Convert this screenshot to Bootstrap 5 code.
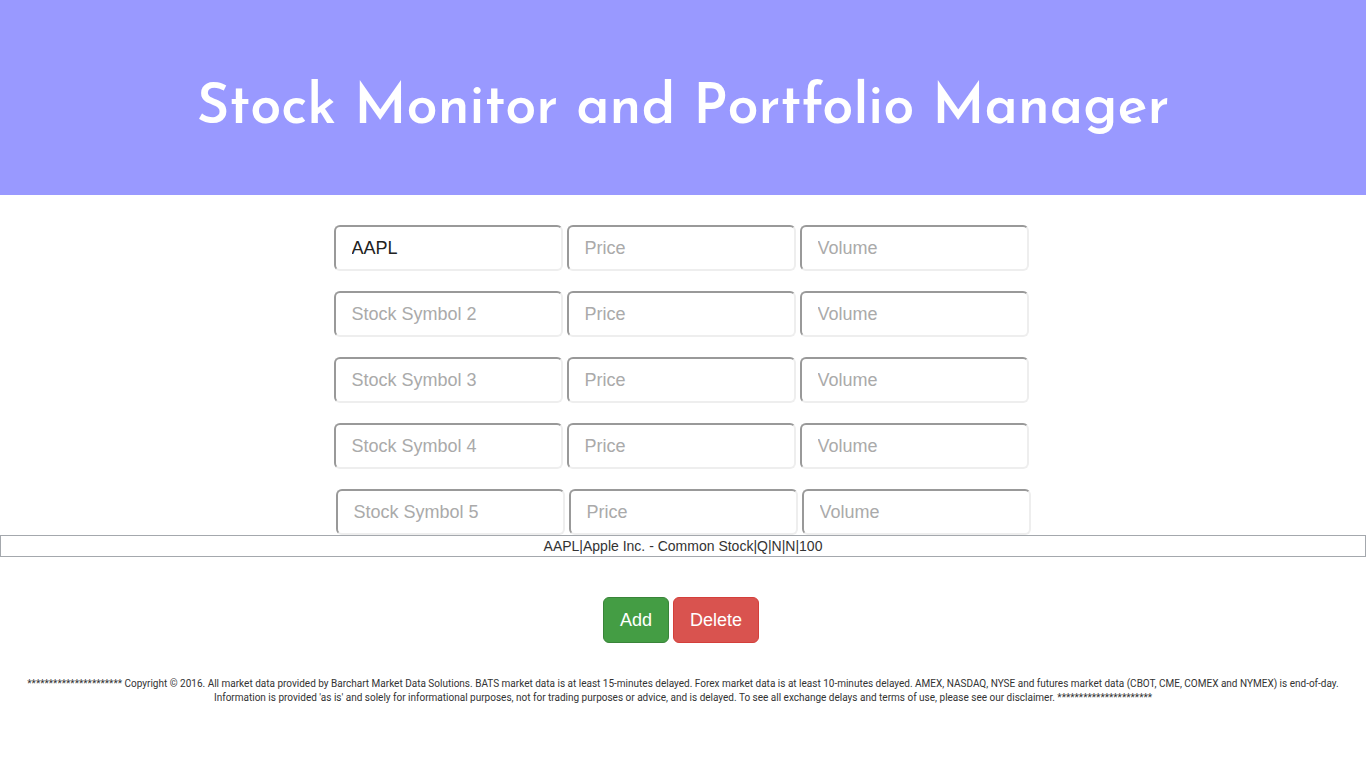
<!DOCTYPE html>
<html lang="en">
<head>
<meta charset="utf-8">
<meta name="viewport" content="width=device-width, initial-scale=1">
<title>Stock Monitor and Portfolio Manager</title>
<link href="https://cdn.jsdelivr.net/npm/bootstrap@5.3.0/dist/css/bootstrap.min.css" rel="stylesheet">
<style>
body { font-family: "Liberation Sans", Arial, sans-serif; font-size: 14px; line-height: 20px; color: #333; background: #fff; }
.banner { background: #99f; padding: 69px 16px 46px; margin-bottom: 30px; }
.banner h1 { font-family: "Josefin Sans", Lato, sans-serif; font-size: 56px; line-height: 80px; font-weight: 600; color: #fff; }
.stock-row + .stock-row { margin-top: 20px; }
.stock-row .form-control { width: 229px; height: 46px; padding: 8px 16px; font-size: 18px; line-height: 24px; color: #222; border: 2px solid #eee; border-top-color: #999; border-left-color: #999; border-radius: 6px; }
.stock-row .form-control::placeholder { color: #aaa; opacity: 1; }
.match-list { border: 1px solid #a4a8ad; margin-bottom: 40px; }
.btn-lg { --bs-btn-padding-x: 16px; --bs-btn-padding-y: 10px; --bs-btn-font-size: 18px; --bs-btn-border-radius: 6px; line-height: 24px; }
.btn-success { --bs-btn-bg: #449d44; --bs-btn-border-color: #398439; }
.btn-danger { --bs-btn-bg: #d9534f; --bs-btn-border-color: #d43f3a; }
footer { font-family: Roboto, sans-serif; font-size: 10px; line-height: 14px; padding: 34px 20px 0; }
</style>
</head>
<body>
<header class="banner text-center">
  <h1 class="m-0">Stock Monitor and Portfolio Manager</h1>
</header>
<main>
  <form>
    <div class="stock-row d-flex justify-content-center gap-1 pe-1">
      <input class="form-control" type="text" value="AAPL" aria-label="Stock Symbol 1">
      <input class="form-control" type="text" placeholder="Price" aria-label="Price 1">
      <input class="form-control" type="text" placeholder="Volume" aria-label="Volume 1">
    </div>
    <div class="stock-row d-flex justify-content-center gap-1 pe-1">
      <input class="form-control" type="text" placeholder="Stock Symbol 2" aria-label="Stock Symbol 2">
      <input class="form-control" type="text" placeholder="Price" aria-label="Price 2">
      <input class="form-control" type="text" placeholder="Volume" aria-label="Volume 2">
    </div>
    <div class="stock-row d-flex justify-content-center gap-1 pe-1">
      <input class="form-control" type="text" placeholder="Stock Symbol 3" aria-label="Stock Symbol 3">
      <input class="form-control" type="text" placeholder="Price" aria-label="Price 3">
      <input class="form-control" type="text" placeholder="Volume" aria-label="Volume 3">
    </div>
    <div class="stock-row d-flex justify-content-center gap-1 pe-1">
      <input class="form-control" type="text" placeholder="Stock Symbol 4" aria-label="Stock Symbol 4">
      <input class="form-control" type="text" placeholder="Price" aria-label="Price 4">
      <input class="form-control" type="text" placeholder="Volume" aria-label="Volume 4">
    </div>
    <div class="stock-row d-flex justify-content-center gap-1">
      <input class="form-control" type="text" placeholder="Stock Symbol 5" aria-label="Stock Symbol 5">
      <input class="form-control" type="text" placeholder="Price" aria-label="Price 5">
      <input class="form-control" type="text" placeholder="Volume" aria-label="Volume 5">
    </div>
    <div class="match-list text-center">AAPL|Apple Inc. - Common Stock|Q|N|N|100</div>
    <div class="d-flex justify-content-center gap-1 pe-1">
      <button type="button" class="btn btn-success btn-lg">Add</button>
      <button type="button" class="btn btn-danger btn-lg">Delete</button>
    </div>
  </form>
</main>
<footer class="text-center">********************** Copyright © 2016. All market data provided by Barchart Market Data Solutions. BATS market data is at least 15-minutes delayed. Forex market data is at least 10-minutes delayed. AMEX, NASDAQ, NYSE and futures market data (CBOT, CME, COMEX and NYMEX) is end-of-day. Information is provided 'as is' and solely for informational purposes, not for trading purposes or advice, and is delayed. To see all exchange delays and terms of use, please see our disclaimer. **********************</footer>
<script src="https://cdn.jsdelivr.net/npm/bootstrap@5.3.0/dist/js/bootstrap.bundle.min.js"></script>
</body>
</html>
